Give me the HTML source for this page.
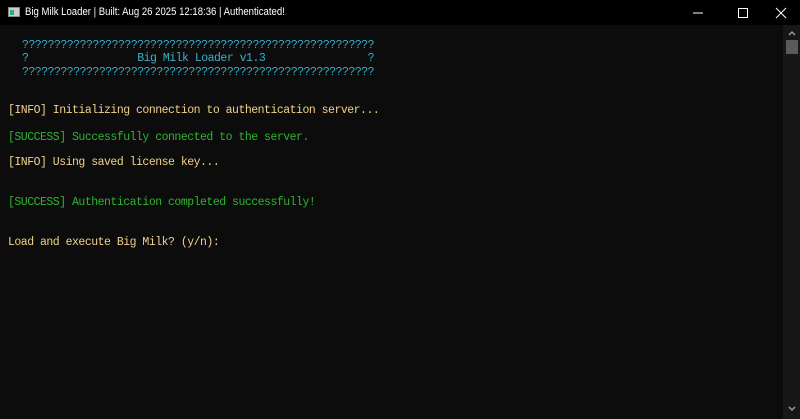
<!DOCTYPE html><html><head><style>
body{margin:0;width:800px;height:419px;background:#0c0c0c;overflow:hidden;position:relative;font-family:"Liberation Mono",monospace;}
.tb{position:absolute;left:0;top:0;width:800px;height:25px;background:#000;color:#fff;font-family:"Liberation Sans",sans-serif;font-size:11px;}
.tb .t{position:absolute;left:25px;top:6px;transform:scaleX(0.87);transform-origin:0 0;white-space:nowrap}
.ic{position:absolute;left:8px;top:7px;width:12px;height:10px;background:#ccc;border:1px solid #888;box-sizing:border-box}
.ic:after{content:"";position:absolute;left:1px;top:2px;width:4px;height:5px;background:#3a7}
.l{position:absolute;white-space:pre;font-size:11.5px;letter-spacing:-0.5px;line-height:13px;}
.c{color:#3ab0c8}.y{color:#f2d28a}.g{color:#2fb52f}
.sb{position:absolute;left:783px;top:25px;width:17px;height:394px;background:#171717}
.th{position:absolute;left:786px;top:40px;width:12px;height:14px;background:#5a5a5a}
</style></head><body>
<div class="tb"><div class="ic"></div><div class="t">Big Milk Loader | Built: Aug 26 2025 12:18:36 | Authenticated!</div>
<svg style="position:absolute;left:690px;top:6px" width="100" height="14"><line x1="3" y1="7" x2="13" y2="7" stroke="#fff"/><rect x="48.5" y="2.5" width="9" height="9" fill="none" stroke="#fff"/><path d="M86 2L96 12M96 2L86 12" stroke="#fff"/></svg></div>
<div class="sb"></div><div class="th"></div>
<svg style="position:absolute;left:786px;top:29px" width="12" height="8"><path d="M3 6L6 3L9 6" stroke="#999" fill="none" stroke-width="1.5"/></svg>
<svg style="position:absolute;left:786px;top:405px" width="12" height="8"><path d="M3 2L6 5L9 2" stroke="#999" fill="none" stroke-width="1.5"/></svg>
<div class="l c" style="left:22px;top:39px">???????????????????????????????????????????????????????</div>
<div class="l c" style="left:22px;top:52px">?                 Big Milk Loader v1.3                ?</div>
<div class="l c" style="left:22px;top:66px">???????????????????????????????????????????????????????</div>
<div class="l y" style="left:8px;top:104px">[INFO] Initializing connection to authentication server...</div>
<div class="l g" style="left:8px;top:131px">[SUCCESS] Successfully connected to the server.</div>
<div class="l y" style="left:8px;top:156px">[INFO] Using saved license key...</div>
<div class="l g" style="left:8px;top:196px">[SUCCESS] Authentication completed successfully!</div>
<div class="l y" style="left:8px;top:236px">Load and execute Big Milk? (y/n):</div>
</body></html>
